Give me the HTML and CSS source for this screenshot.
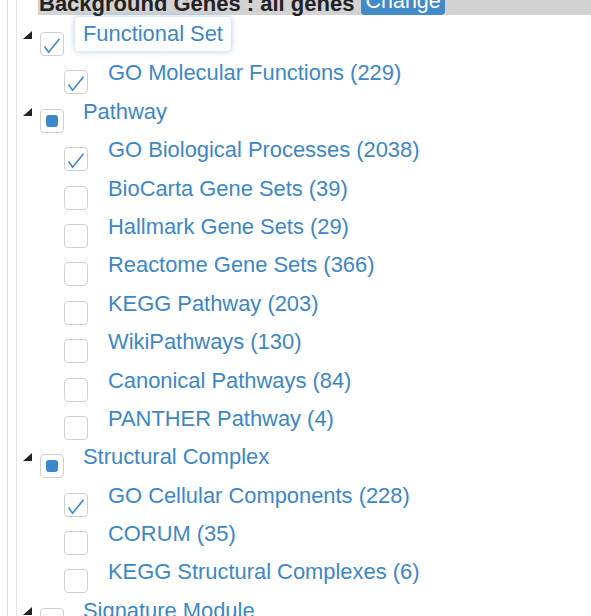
FILE: index.html
```html
<!DOCTYPE html>
<html>
<head>
<meta charset="utf-8">
<link rel="stylesheet" href="styles.css">
</head>
<body>
<div class="frame">
  <div class="inner">
    <div class="bg-bar">
      <span class="bg-label">Background Genes : all genes</span>
      <span class="change">Change</span>
    </div>
    <ul class="tree">
      <li>
        <div class="row"><span class="ocl"></span><span class="cb"><svg class="tick" viewBox="0 0 22 22"><polyline points="3.5,13.5 7.6,19.2 18.5,5.8"/></svg></span><span class="label selected">Functional Set</span></div>
        <ul class="sub">
          <li><div class="row"><span class="cb"><svg class="tick" viewBox="0 0 22 22"><polyline points="3.5,13.5 7.6,19.2 18.5,5.8"/></svg></span><span class="label">GO Molecular Functions (229)</span></div></li>
        </ul>
      </li>
      <li>
        <div class="row"><span class="ocl"></span><span class="cb partial"></span><span class="label">Pathway</span></div>
        <ul class="sub">
          <li><div class="row"><span class="cb"><svg class="tick" viewBox="0 0 22 22"><polyline points="3.5,13.5 7.6,19.2 18.5,5.8"/></svg></span><span class="label">GO Biological Processes (2038)</span></div></li>
          <li><div class="row"><span class="cb"></span><span class="label">BioCarta Gene Sets (39)</span></div></li>
          <li><div class="row"><span class="cb"></span><span class="label">Hallmark Gene Sets (29)</span></div></li>
          <li><div class="row"><span class="cb"></span><span class="label">Reactome Gene Sets (366)</span></div></li>
          <li><div class="row"><span class="cb"></span><span class="label">KEGG Pathway (203)</span></div></li>
          <li><div class="row"><span class="cb"></span><span class="label">WikiPathways (130)</span></div></li>
          <li><div class="row"><span class="cb"></span><span class="label">Canonical Pathways (84)</span></div></li>
          <li><div class="row"><span class="cb"></span><span class="label">PANTHER Pathway (4)</span></div></li>
        </ul>
      </li>
      <li>
        <div class="row"><span class="ocl"></span><span class="cb partial"></span><span class="label">Structural Complex</span></div>
        <ul class="sub">
          <li><div class="row"><span class="cb"><svg class="tick" viewBox="0 0 22 22"><polyline points="3.5,13.5 7.6,19.2 18.5,5.8"/></svg></span><span class="label">GO Cellular Components (228)</span></div></li>
          <li><div class="row"><span class="cb"></span><span class="label">CORUM (35)</span></div></li>
          <li><div class="row"><span class="cb"></span><span class="label">KEGG Structural Complexes (6)</span></div></li>
        </ul>
      </li>
      <li>
        <div class="row"><span class="ocl"></span><span class="cb"></span><span class="label">Signature Module</span></div>
      </li>
    </ul>
  </div>
</div>
</body>
</html>
```

FILE: styles.css
```css
html, body {
  margin: 0;
  padding: 0;
  background: #fff;
  overflow: hidden;
}
body {
  font-family: "Liberation Sans", Arial, sans-serif;
  width: 591px;
  height: 616px;
}
.frame {
  margin-left: 7px;
  border-left: 1px solid #dcdcdc;
  height: 640px;
  padding-left: 8px;
  background: #fff;
}
.inner {
  border-left: 1px solid #e4e4e4;
  height: 100%;
  background: #fff;
}
.bg-bar {
  margin-top: -10px;
  margin-left: 21px;
  height: 25px;
  background: #d3d3d3;
  display: flex;
  align-items: flex-end;
  gap: 7px;
}
.bg-label {
  font-weight: bold;
  font-size: 22px;
  line-height: 22px;
  color: #222;
  padding-left: 1px;
}
.change {
  background: #428bca;
  color: #fff;
  font-size: 21.5px;
  line-height: 24px;
  padding: 0 4px 2px 4px;
  border-radius: 0 0 4px 4px;
}
.tree, .sub {
  list-style: none;
  margin: 0;
  padding: 0;
}
.sub {
  padding-left: 48px;
}
.row {
  height: 38.4px;
  display: flex;
  align-items: flex-start;
}
.tree > li > .row {
  padding-left: 6px;
}
.ocl {
  width: 0;
  height: 0;
  border-style: solid;
  border-width: 0 0 8px 9px;
  border-color: transparent transparent #222 transparent;
  margin-top: 16px;
  margin-right: 9px;
}
.cb {
  width: 22px;
  height: 22px;
  border: 1px solid #cfcfcf;
  border-radius: 4px;
  margin-top: 17px;
  margin-right: 19px;
  margin-left: -1px;
  background: #fff;
  flex: none;
  position: relative;
}
.sub .cb {
  margin-right: 20px;
}
.tick {
  display: block;
  width: 22px;
  height: 22px;
}
.tick polyline {
  fill: none;
  stroke: #3f88cc;
  stroke-width: 1.6;
  stroke-linejoin: miter;
  stroke-linecap: butt;
}
.cb.partial::after {
  content: "";
  position: absolute;
  left: 5px;
  top: 5px;
  width: 12px;
  height: 12px;
  border-radius: 3px;
  background: #3d87cd;
}
.label {
  font-size: 21.9px;
  line-height: 38px;
  padding-top: 1px;
  color: #3b87c8;
  white-space: nowrap;
}
.label.selected {
  margin-left: -8px;
  padding: 0 8px;
  line-height: 34px;
  margin-top: 2px;
  border-radius: 4px;
  background: #fff;
  box-shadow: 0 0 6px rgba(66, 139, 202, 0.45);
}
```
